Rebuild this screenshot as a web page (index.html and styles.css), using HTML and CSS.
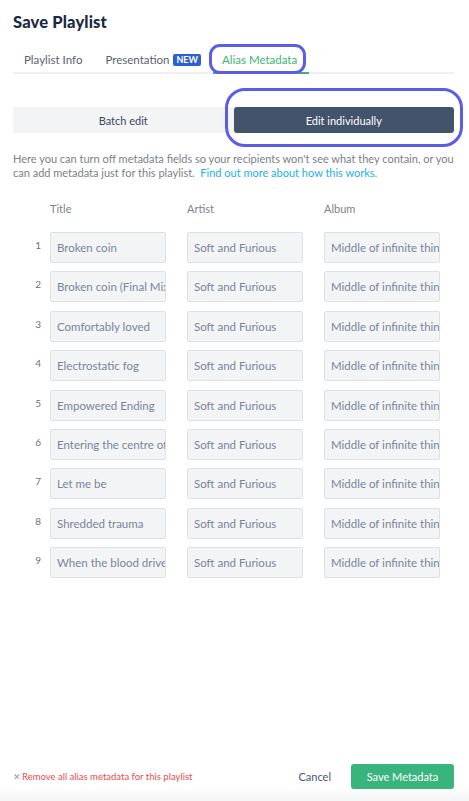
FILE: index.html
```html
<!DOCTYPE html>
<html>
<head>
<meta charset="utf-8">
<link rel="stylesheet" href="styles.css">
</head>
<body>
<div class="page">
  <h1 class="title">Save Playlist</h1>
  <div class="tabs">
    <div class="tab">Playlist Info</div>
    <div class="tab">Presentation <span class="badge">NEW</span></div>
    <div class="tab active">Alias Metadata<span class="ring ring-tab"></span></div>
  </div>
  <div class="segment">
    <div class="seg">Batch edit</div>
    <div class="seg on">Edit individually<span class="ring ring-seg"></span></div>
  </div>
  <p class="desc">Here you can turn off metadata fields so your recipients won't see what they contain, or you can add metadata just for this playlist. &nbsp;<a class="link">Find out more about how this works.</a></p>
  <div class="grid">
    <div class="hd"></div><div class="hd">Title</div><div class="hd">Artist</div><div class="hd">Album</div>
    <div class="num">1</div><div class="in">Broken coin</div><div class="in">Soft and Furious</div><div class="in">Middle of infinite things</div>
    <div class="num">2</div><div class="in">Broken coin (Final Mix)</div><div class="in">Soft and Furious</div><div class="in">Middle of infinite things</div>
    <div class="num">3</div><div class="in">Comfortably loved</div><div class="in">Soft and Furious</div><div class="in">Middle of infinite things</div>
    <div class="num">4</div><div class="in">Electrostatic fog</div><div class="in">Soft and Furious</div><div class="in">Middle of infinite things</div>
    <div class="num">5</div><div class="in">Empowered Ending</div><div class="in">Soft and Furious</div><div class="in">Middle of infinite things</div>
    <div class="num">6</div><div class="in">Entering the centre of</div><div class="in">Soft and Furious</div><div class="in">Middle of infinite things</div>
    <div class="num">7</div><div class="in">Let me be</div><div class="in">Soft and Furious</div><div class="in">Middle of infinite things</div>
    <div class="num">8</div><div class="in">Shredded trauma</div><div class="in">Soft and Furious</div><div class="in">Middle of infinite things</div>
    <div class="num">9</div><div class="in">When the blood drives</div><div class="in">Soft and Furious</div><div class="in">Middle of infinite things</div>
  </div>
  <div class="spacer"></div>
  <div class="footer">
    <div class="remove"><span class="x">✕</span>Remove all alias metadata for this playlist</div>
    <div class="cancel">Cancel</div>
    <div class="save">Save Metadata</div>
  </div>
</div>
</body>
</html>
```
FILE: styles.css
```css
* { box-sizing: border-box; }
html, body { margin: 0; padding: 0; background: #fff; }
body { font-family: Lato, "Open Sans", sans-serif; color: #2b3348; }
.page { height: 801px; display: flex; flex-direction: column; padding: 0 15px 0 13px; }
.title { margin: 10px 0 0; font-size: 16.5px; line-height: 24px; font-weight: 900; color: #1c2944; letter-spacing: 0.15px; }
.tabs { margin-top: 14px; display: flex; height: 26px; border-bottom: 2px solid #eef0f2; padding-left: 11px; }
.tab { position: relative; font-size: 11.5px; color: #5a6270; line-height: 24px; margin-right: 23px; display: flex; align-items: center; }
.tab.active { color: #3ab47b; border-bottom: 2px solid #3ab47b; margin-bottom: -2px; padding: 0 12px 0 9px; margin-left: -11px; margin-right: 0; }
.badge { display: inline-block; background: #2d5fd1; color: #fff; font-size: 9px; line-height: 12px; padding: 0 3px; border-radius: 2px; margin-left: 4px; font-weight: 700; }
.ring { position: absolute; border: 3px solid #5b5de6; pointer-events: none; }
.ring-tab { left: -4px; right: 3px; top: -4px; bottom: -2px; border-radius: 11px; }
.segment { margin-top: 33px; display: flex; height: 26px; }
.seg { flex: 1; display: flex; align-items: center; justify-content: center; font-size: 11px; color: #3d475c; background: #f3f4f6; position: relative; }
.seg.on { background: #43536b; color: #fff; border-radius: 3px; }
.ring-seg { left: -9px; right: -9px; top: -19px; bottom: -14px; border-radius: 20px; }
.desc { margin: 19px 0 0; font-size: 11px; line-height: 14px; color: #7b7f86; }
.link { color: #1bb0e9; }
.grid { margin-top: 20px; display: grid; grid-template-columns: 37px 137px 137px 116px; row-gap: 8.4px; grid-template-rows: 23.6px; grid-auto-rows: 31px; }
.hd { font-size: 11px; color: #7e828a; line-height: 18px; }
.num { font-size: 10px; color: #6c717a; text-align: right; padding-right: 9px; padding-top: 7px; }
.in { width: 116px; background: #f3f4f6; border: 1px solid #dde0e5; border-radius: 2px; font-size: 11.5px; color: #7a8499; white-space: nowrap; overflow: hidden; padding: 0 6px; display: flex; align-items: center; }
.spacer { flex: 1; }
.footer { height: 48px; display: flex; align-items: flex-start; padding-top: 11px; margin: 0 -15px 0 -13px; padding-left: 13px; padding-right: 15px; background: linear-gradient(#fff 0, #fff 34px, #f5f5f5 48px); }
.remove { font-size: 9.5px; color: #ea4a4f; line-height: 25px; flex: 1; }
.x { color: #9a9a9a; font-size: 9px; margin-right: 1px; }
.cancel { font-size: 11px; color: #4a5670; line-height: 25px; margin-right: 20px; }
.save { background: #38b47d; color: #fff; font-size: 11px; height: 25px; width: 103px; border-radius: 3px; display: flex; align-items: center; justify-content: center; }
```
